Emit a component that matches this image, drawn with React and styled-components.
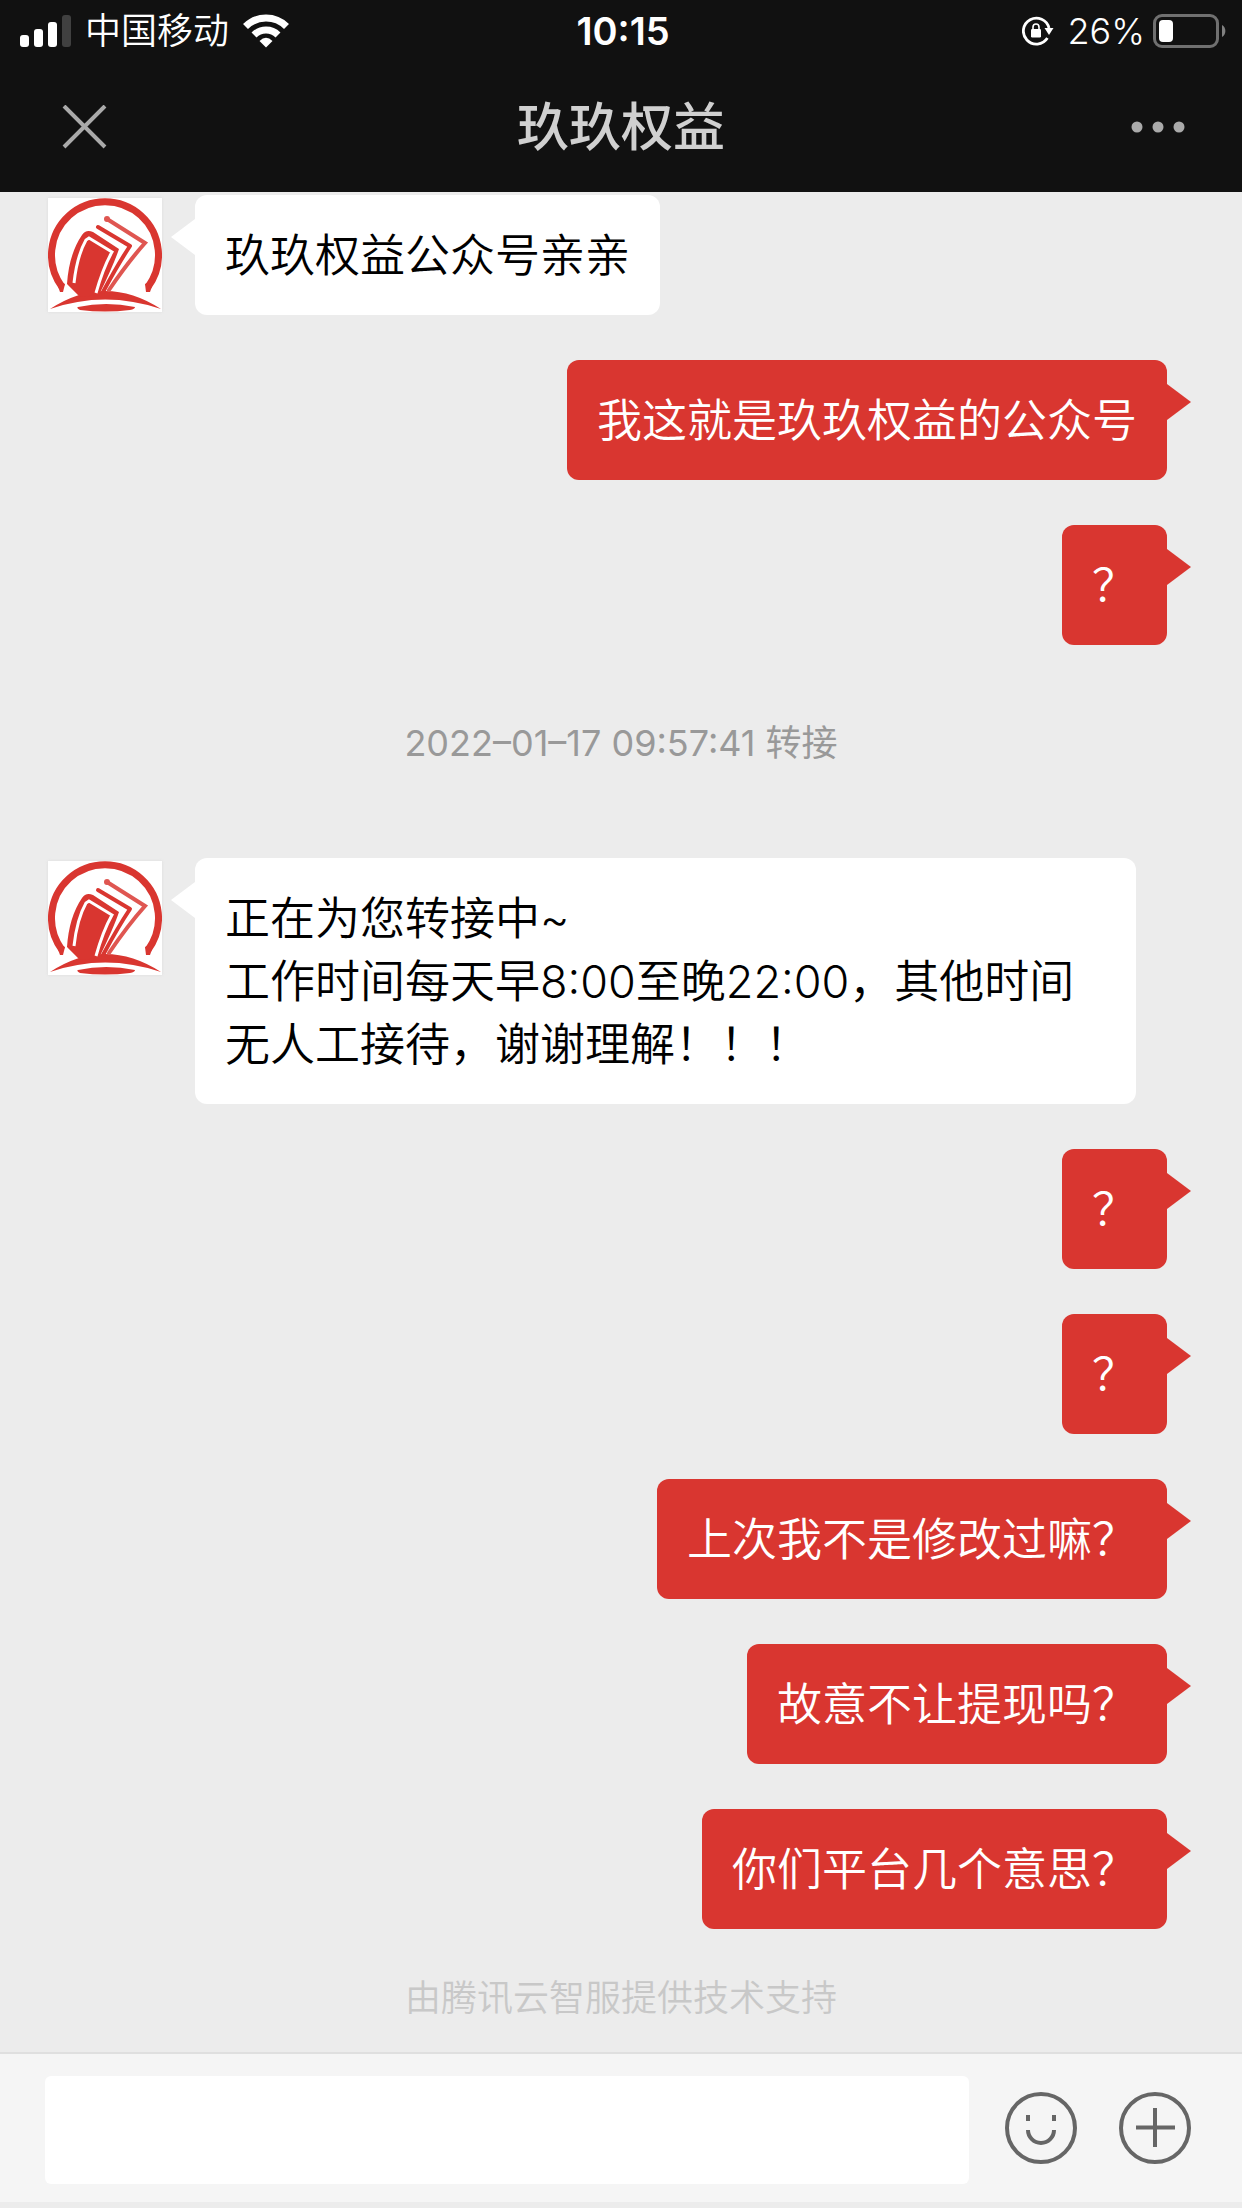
import React, { useState } from "react";
import styled, { createGlobalStyle } from "styled-components";

const GlobalStyle = createGlobalStyle`
  *, *::before, *::after { box-sizing: border-box; }
  body {
    margin: 0;
    background: #ececec;
    font-family: Inter, "Noto Sans CJK SC", sans-serif;
    font-weight: 350;
  }
  button { border: 0; padding: 0; background: none; cursor: pointer; }
  svg { display: block; }
`;

const Page = styled.div`
  min-height: 100vh;
  display: flex;
  flex-direction: column;
`;

const TopArea = styled.header`
  background: #111;
`;

const StatusBar = styled.div`
  display: grid;
  grid-template-columns: 1fr auto 1fr;
  align-items: center;
  height: 62px;
  padding: 0 16px 0 20px;
  color: #fff;
  font-size: 36px;
  line-height: 60px;
`;

const StatusGroup = styled.div`
  display: flex;
  align-items: center;
  justify-content: ${(p) => (p.$end ? "flex-end" : "flex-start")};
  gap: ${(p) => (p.$end ? 8 : 14)}px;
`;

const Clock = styled.time`
  font-size: 38px;
  font-weight: 600;
`;

const Percent = styled.span`
  padding-left: 6px;
`;

const TitleBar = styled.div`
  display: grid;
  grid-template-columns: 1fr auto 1fr;
  align-items: center;
  height: 130px;
  padding: 0 56px;
`;

const Title = styled.h1`
  margin: 0;
  padding-top: 2px;
  color: #d0d0d0;
  font-size: 52px;
  font-weight: 500;
  line-height: 72px;
`;

const BarButton = styled.button`
  justify-self: ${(p) => (p.$end ? "end" : "start")};
`;

const Chat = styled.main`
  flex: 1;
  display: flex;
  flex-direction: column;
  gap: 45px;
  padding: 3px 48px 0;
`;

const Row = styled.div`
  display: flex;
  align-items: flex-start;
  gap: 33px;
  justify-content: ${(p) => (p.$sent ? "flex-end" : "flex-start")};
  padding-right: 27px;
`;

const Avatar = styled.div`
  flex: none;
  width: 114px;
  height: 114px;
  margin-top: 3px;
  background: #fff;
  box-shadow: 0 0 3px #dcdcdc;
`;

const Bubble = styled.p`
  position: relative;
  margin: 0;
  padding: 29px 30px 28px;
  max-width: 941px;
  border-radius: 12px;
  font-size: 45px;
  line-height: 63px;
  white-space: pre-line;
  color: ${(p) => (p.$sent ? "#fff" : "#000")};
  background: ${(p) => (p.$sent ? "#d93630" : "#fff")};

  &::after {
    content: "";
    position: absolute;
    top: 24px;
    ${(p) => (p.$sent ? "left: 100%;" : "right: 100%;")}
    width: 24px;
    height: 36px;
    background: inherit;
    clip-path: ${(p) =>
      p.$sent ? "polygon(0 0, 100% 50%, 0 100%)" : "polygon(100% 0, 0 50%, 100% 100%)"};
  }
`;

const Notice = styled.p`
  margin: 0;
  padding: 28px 0 45px;
  text-align: center;
  color: #999;
  font-size: 36px;
  font-weight: 400;
  line-height: 50px;
`;

const Support = styled.footer`
  margin-top: auto;
  padding-bottom: 30px;
  text-align: center;
  color: #c8c8c8;
  font-size: 36px;
  line-height: 48px;
`;

const Composer = styled.form`
  display: flex;
  align-items: center;
  margin-bottom: 6px;
  padding: 22px 51px 18px 45px;
  border-top: 2px solid #dfdfdf;
  background: #f5f5f5;
`;

const MessageInput = styled.input`
  flex: 1;
  min-width: 0;
  height: 108px;
  margin-right: 36px;
  padding: 0 24px;
  border: 0;
  border-radius: 6px;
  outline: 0;
  background: #fff;
  font: inherit;
  font-size: 45px;
`;

const RoundButton = styled.button`
  flex: none;
  padding-bottom: 4px;
  & + & { margin-left: 42px; }
`;

function Signal() {
  return (
    <svg width="51" height="32" viewBox="0 0 51 32" fill="#fff" aria-hidden="true">
      <rect x="0" y="20" width="9" height="12" rx="3" />
      <rect x="14" y="14" width="9" height="18" rx="3" />
      <rect x="28" y="7" width="9" height="25" rx="3" />
      <rect x="42" y="0" width="9" height="32" rx="3" fill="#404040" />
    </svg>
  );
}

function Wifi() {
  return (
    <svg width="46" height="34" viewBox="0 0 46 34" aria-hidden="true">
      <g fill="none" stroke="#fff" strokeWidth="7">
        <path d="M2.500 12.500 A29 29 0 0 1 43.500 12.500" />
        <path d="M11 21 A17 17 0 0 1 35 21" />
      </g>
      <path d="M23 33.500 L16.500 27 Q23 20.500 29.500 27 Z" fill="#fff" />
    </svg>
  );
}

function RotationLock() {
  return (
    <svg width="32" height="30" viewBox="0 0 32 30" aria-hidden="true">
      <path d="M25.400 22 A13 13 0 1 1 27 12" fill="none" stroke="#fff" strokeWidth="2.800" />
      <path d="M22.500 12 H31.500 L27 19 Z" fill="#fff" />
      <rect x="9" y="13" width="10" height="8.500" rx="1.200" fill="#fff" />
      <path d="M11 14 V11 A3 3 0 0 1 17 11 V14" fill="none" stroke="#fff" strokeWidth="1.600" />
    </svg>
  );
}

function Battery() {
  return (
    <svg width="73" height="34" viewBox="0 0 73 34" aria-hidden="true">
      <rect x="1.500" y="1.500" width="63" height="31" rx="7.500" fill="none" stroke="#707070" strokeWidth="3" />
      <rect x="6" y="6" width="14" height="22" rx="4" fill="#fff" />
      <path d="M69 11 A7 7 0 0 1 69 23 Z" fill="#808080" />
    </svg>
  );
}

function BookLogo() {
  return (
    <svg width="114" height="114" viewBox="0 0 114 114" role="img" aria-label="玖玖权益">
      <path d="M14 89 A53.500 53.500 0 1 1 100 89" fill="none" stroke="#d93630" strokeWidth="7" />
      <path d="M7 80 L17 86 L15 94 L12 94 Z M107 80 L97 86 L98 94 L102 94 Z" fill="#d93630" />
      <path d="M2 111 Q57 75 113 111 Q57 92 2 111 Z" fill="#d93630" />
      <path d="M30 109 Q58 103 87 109 Q87 111 82 112 Q57 115 32 112 Q28 110 30 109 Z" fill="#d93630" />
      <path d="M19 86 Q21 56 34 37 Q38 31 45 34 L71 51 Q66 66 51 97 L32 99 Z" fill="#d93630" />
      <path d="M26 85 Q29 58 38 42 L41 40 L64 54 Q55 70 48 95" fill="none" stroke="#fff" strokeWidth="3" />
      <path d="M50 29 L82 48 Q70 66 55 94" fill="none" stroke="#d93630" strokeWidth="4" strokeLinecap="round" strokeLinejoin="round" />
      <path d="M59 21 L97 45 Q80 64 61 92" fill="none" stroke="#df5651" strokeWidth="4" strokeLinecap="round" />
      <circle cx="59" cy="21" r="3" fill="#df5651" />
    </svg>
  );
}

const messages = [
  { from: "agent", text: "玖玖权益公众号亲亲" },
  { from: "me", text: "我这就是玖玖权益的公众号" },
  { from: "me", text: "？" },
  { from: "system", text: "2022–01–17 09:57:41 转接" },
  {
    from: "agent",
    text: "正在为您转接中~\n工作时间每天早8:00至晚22:00，其他时间无人工接待，谢谢理解！！！",
  },
  { from: "me", text: "？" },
  { from: "me", text: "？" },
  { from: "me", text: "上次我不是修改过嘛？" },
  { from: "me", text: "故意不让提现吗？" },
  { from: "me", text: "你们平台几个意思？" },
];

function Message({ from, text }) {
  if (from === "system") return <Notice>{text}</Notice>;
  const sent = from === "me";
  return (
    <Row $sent={sent}>
      {!sent && (
        <Avatar>
          <BookLogo />
        </Avatar>
      )}
      <Bubble $sent={sent}>{text}</Bubble>
    </Row>
  );
}

export default function App() {
  const [draft, setDraft] = useState("");
  return (
    <Page lang="zh-CN">
      <GlobalStyle />
      <TopArea>
        <StatusBar>
          <StatusGroup>
            <Signal />
            <span>中国移动</span>
            <Wifi />
          </StatusGroup>
          <Clock>10:15</Clock>
          <StatusGroup $end>
            <RotationLock />
            <Percent>26%</Percent>
            <Battery />
          </StatusGroup>
        </StatusBar>
        <TitleBar>
          <BarButton type="button" aria-label="关闭">
            <svg width="56" height="44" viewBox="0 0 56 44" stroke="#aaa" strokeWidth="4">
              <path d="M8 1 L49 42 M49 1 L8 42" />
            </svg>
          </BarButton>
          <Title>玖玖权益</Title>
          <BarButton type="button" aria-label="更多" $end>
            <svg width="56" height="12" viewBox="0 0 56 12" fill="#aaa">
              <circle cx="7" cy="6" r="5.500" />
              <circle cx="28" cy="6" r="5.500" />
              <circle cx="49" cy="6" r="5.500" />
            </svg>
          </BarButton>
        </TitleBar>
      </TopArea>
      <Chat>
        {messages.map((m, i) => (
          <Message key={i} from={m.from} text={m.text} />
        ))}
        <Support>由腾讯云智服提供技术支持</Support>
      </Chat>
      <Composer onSubmit={(e) => e.preventDefault()}>
        <MessageInput
          aria-label="输入消息"
          value={draft}
          onChange={(e) => setDraft(e.target.value)}
        />
        <RoundButton type="button" aria-label="表情">
          <svg width="72" height="72" viewBox="0 0 72 72" fill="none" stroke="#666" strokeWidth="4">
            <circle cx="36" cy="36" r="34" />
            <path d="M23 38 A13 13 0 0 0 49 38" />
            <path d="M23 23 V29 M49 23 V29" />
          </svg>
        </RoundButton>
        <RoundButton type="button" aria-label="更多功能">
          <svg width="72" height="72" viewBox="0 0 72 72" fill="none" stroke="#666" strokeWidth="4">
            <circle cx="36" cy="36" r="34" />
            <path d="M36 16 V55 M17 35.500 H56" />
          </svg>
        </RoundButton>
      </Composer>
    </Page>
  );
}
